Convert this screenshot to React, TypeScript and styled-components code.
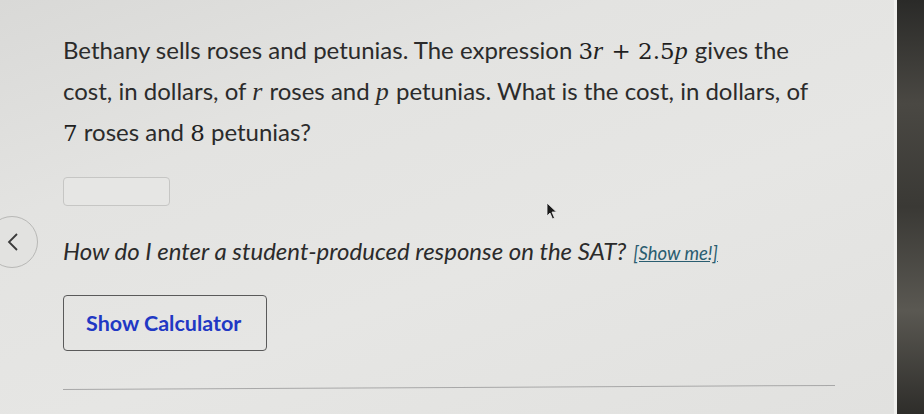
import React from "react";
import styled, { createGlobalStyle } from "styled-components";

const GlobalStyle = createGlobalStyle`
  html, body {
    margin: 0;
    padding: 0;
    width: 924px;
    height: 414px;
    overflow: hidden;
    background: #d8d8d6;
  }
  * {
    box-sizing: border-box;
  }
`;

const Screen = styled.div`
  display: flex;
  width: 924px;
  height: 414px;
  font-family: Lato, "Open Sans", sans-serif;
`;

const Page = styled.main`
  position: relative;
  flex: 1;
  padding: 30px 40px 0 63px;
  background: linear-gradient(160deg, #d9d9d7 0%, #e3e3e1 30%, #e6e6e4 60%, #e1e1df 100%);
  display: flex;
  flex-direction: column;
`;

const Bezel = styled.div`
  width: 30px;
  border-left: 3px solid #f0f0ee;
  background: linear-gradient(180deg, #2a2a28 0%, #4a4843 25%, #3a3935 50%, #5a5852 75%, #2e2d2a 100%);
`;

const Question = styled.p`
  margin: 0;
  font-size: 24px;
  line-height: 40px;
  color: #2b2b2b;
  width: 745px;
`;

const Math = styled.span`
  font-family: "DejaVu Serif", "Liberation Serif", serif;
  font-size: 23px;
  color: #1f1f1f;
`;

const Var = styled.i`
  font-style: italic;
  font-family: "Liberation Serif", serif;
  font-size: 26px;
  padding-right: 1px;
`;

const AnswerBox = styled.div`
  margin-top: 24px;
  width: 107px;
  height: 29px;
  border: 1.5px solid #c6c6c4;
  border-radius: 4px;
  background: #e6e6e4;
`;

const HelpLine = styled.p`
  margin: 29px 0 0;
  font-size: 24px;
  line-height: 32px;
  font-style: italic;
  color: #2b2b2b;
`;

const ShowMe = styled.a`
  font-size: 18.5px;
  color: #2a5d70;
  text-decoration: underline;
  margin-left: 7px;
`;

const CalcButton = styled.button`
  margin-top: 26px;
  width: 204px;
  height: 56px;
  border: 1.5px solid #5a5a5a;
  border-radius: 4px;
  background: transparent;
  font-family: Lato, sans-serif;
  font-weight: 700;
  font-size: 21.5px;
  color: #2138c4;
  text-align: left;
  padding: 0 0 0 22px;
`;

const Rule = styled.hr`
  margin: 38px 0 0;
  width: 772px;
  border: none;
  border-top: 1px solid #a8a8a8;
  transform: rotate(-0.3deg);
  transform-origin: left;
`;

const BackButton = styled.div`
  position: absolute;
  left: -14px;
  top: 216px;
  width: 52px;
  height: 52px;
  border-radius: 50%;
  border: 1px solid #b8b8b6;
  background: #e2e2e0;
  display: flex;
  align-items: center;
  justify-content: flex-end;
  padding-right: 18px;
`;

const Pointer = styled.svg`
  position: absolute;
  left: 546px;
  top: 202px;
`;

export default function App() {
  return (
    <Screen>
      <GlobalStyle />
      <Page>
        <Question>
          Bethany sells roses and petunias. The expression{" "}
          <Math>
            3<Var>r</Var> + 2.5<Var>p</Var>
          </Math>{" "}
          gives the cost, in dollars, of <Var>r</Var> roses and <Var>p</Var>{" "}
          petunias. What is the cost, in dollars, of <Math>7</Math> roses and{" "}
          <Math>8</Math> petunias?
        </Question>
        <AnswerBox />
        <HelpLine>
          How do I enter a student-produced response on the SAT?
          <ShowMe>[Show me!]</ShowMe>
        </HelpLine>
        <div>
          <CalcButton>Show Calculator</CalcButton>
        </div>
        <Rule />
        <BackButton>
          <svg width="12" height="18" viewBox="0 0 12 18">
            <path d="M10 1 L2 9 L10 17" fill="none" stroke="#3a3a3a" strokeWidth="1.8" />
          </svg>
        </BackButton>
        <Pointer width="12" height="18" viewBox="0 0 12 18">
          <path d="M1 1 L1 14 L4 11 L6.5 17 L8.5 16 L6 10 L10.5 10 Z" fill="#1a1a1a" stroke="#eee" strokeWidth="0.8" />
        </Pointer>
      </Page>
      <Bezel />
    </Screen>
  );
}
